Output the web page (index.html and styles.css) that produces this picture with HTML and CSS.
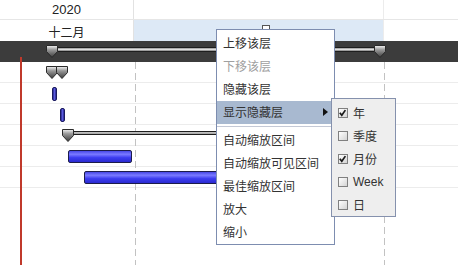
FILE: index.html
```html
<!DOCTYPE html>
<html>
<head>
<meta charset="utf-8">
<link rel="stylesheet" href="styles.css">
</head>
<body>
<div class="chart">
  <svg class="defs" width="0" height="0">
    <defs>
      <linearGradient id="mk" x1="0" y1="0" x2="0" y2="1">
        <stop offset="0" stop-color="#f4f4f4"/>
        <stop offset="0.35" stop-color="#9a9a9a"/>
        <stop offset="1" stop-color="#3a3a3a"/>
      </linearGradient>
    </defs>
  </svg>
  <div class="hrow hrow-year">
    <div class="cell cell-a">2020</div>
    <div class="cell cell-b"></div>
    <div class="cell cell-c"></div>
  </div>
  <div class="hrow hrow-month">
    <div class="cell cell-a">十二月</div>
    <div class="cell cell-b cell-sel"></div>
    <div class="cell cell-c"></div>
  </div>
  <div class="darkbar"></div>
  <div class="rows">
    <div class="row"></div>
    <div class="row"></div>
    <div class="row"></div>
    <div class="row"></div>
    <div class="row"></div>
    <div class="row"></div>
  </div>

  <div class="vline dash dash-1"></div>
  <div class="vline dash dash-2"></div>
  <div class="vline today"></div>
  <div class="scalebox"></div>

  <div class="track track-top"></div>
  <svg class="marker mk-top-start" viewBox="0 0 12 13"><path d="M0.5 0.5H11.5V6.5L6 12.5L0.5 6.5Z" fill="url(#mk)" stroke="#2a2a2a"/></svg>
  <svg class="marker mk-top-end" viewBox="0 0 12 13"><path d="M0.5 0.5H11.5V6.5L6 12.5L0.5 6.5Z" fill="url(#mk)" stroke="#2a2a2a"/></svg>

  <svg class="marker mk-r1a" viewBox="0 0 12 13"><path d="M0.5 0.5H11.5V6.5L6 12.5L0.5 6.5Z" fill="url(#mk)" stroke="#2a2a2a"/></svg>
  <svg class="marker mk-r1b" viewBox="0 0 12 13"><path d="M0.5 0.5H11.5V6.5L6 12.5L0.5 6.5Z" fill="url(#mk)" stroke="#2a2a2a"/></svg>

  <div class="pill pill-1"></div>
  <div class="pill pill-2"></div>

  <div class="track track-sum"></div>
  <svg class="marker mk-sum" viewBox="0 0 12 13"><path d="M0.5 0.5H11.5V6.5L6 12.5L0.5 6.5Z" fill="url(#mk)" stroke="#2a2a2a"/></svg>

  <div class="bar bar-1"></div>
  <div class="bar bar-2"></div>

  <div class="menu">
    <div class="mi">上移该层</div>
    <div class="mi mi-dis">下移该层</div>
    <div class="mi">隐藏该层</div>
    <div class="mi mi-hl">显示隐藏层<span class="arrow"></span></div>
    <div class="sep"></div>
    <div class="mi">自动缩放区间</div>
    <div class="mi">自动缩放可见区间</div>
    <div class="mi">最佳缩放区间</div>
    <div class="mi">放大</div>
    <div class="mi">缩小</div>
  </div>

  <div class="submenu">
    <div class="si"><span class="cb"><svg viewBox="0 0 10 10"><path d="M2 4.8L4.2 7.6L8.2 1.8" fill="none" stroke="#1a1a1a" stroke-width="1.9"/></svg></span>年</div>
    <div class="si"><span class="cb"></span>季度</div>
    <div class="si"><span class="cb"><svg viewBox="0 0 10 10"><path d="M2 4.8L4.2 7.6L8.2 1.8" fill="none" stroke="#1a1a1a" stroke-width="1.9"/></svg></span>月份</div>
    <div class="si si-latin"><span class="cb"></span>Week</div>
    <div class="si"><span class="cb"></span>日</div>
  </div>
</div>
</body>
</html>
```

FILE: styles.css
```css
html, body {
  margin: 0;
  padding: 0;
  background: #ffffff;
}
body {
  width: 458px;
  height: 265px;
  overflow: hidden;
  font-family: "Liberation Sans", "Noto Sans CJK SC", sans-serif;
  color: #333333;
}
.chart {
  position: relative;
  width: 458px;
  height: 265px;
}
.defs {
  position: absolute;
}
.hrow {
  display: flex;
}
.hrow-year {
  height: 19px;
  border-bottom: 1px solid #e6e6e6;
}
.hrow-month {
  height: 21px;
}
.cell {
  display: flex;
  align-items: center;
  justify-content: center;
  font-size: 13px;
  color: #222222;
}
.cell-a {
  width: 133px;
  border-right: 1px solid #e2e2e2;
}
.hrow-month .cell-a {
  font-family: "Noto Sans CJK SC", sans-serif;
  font-size: 12px;
  padding-top: 1px;
}
.cell-b {
  width: 249px;
  border-right: 1px solid #ececec;
}
.cell-sel {
  background: #dde9f6;
}
.cell-c {
  flex: 1;
}
.darkbar {
  height: 21px;
  background: #3c3c3c;
}
.row {
  height: 20px;
  border-bottom: 1px solid #ececec;
}

.vline {
  position: absolute;
  width: 1px;
}
.dash {
  top: 62px;
  bottom: 0;
  background: repeating-linear-gradient(to bottom, #c2c2c2 0 7px, transparent 7px 11px);
}
.dash-1 { left: 135px; }
.dash-2 { left: 384px; }
.today {
  left: 20px;
  top: 57px;
  bottom: 0;
  width: 2px;
  background: #c0392b;
}
.scalebox {
  position: absolute;
  left: 262px;
  top: 25px;
  width: 6px;
  height: 6px;
  border: 1px solid #555555;
  background: #ffffff;
}

.track {
  position: absolute;
  height: 3px;
  border: 1px solid #1e1e1e;
  background: linear-gradient(to bottom, #8a8a8a, #e8e8e8 45%, #7a7a7a);
}
.track-top {
  left: 56px;
  width: 318px;
  top: 47px;
}
.track-sum {
  left: 72px;
  width: 190px;
  top: 131px;
  height: 2px;
}
.marker {
  position: absolute;
  width: 12px;
  height: 13px;
}
.mk-top-start { left: 46px; top: 45px; }
.mk-top-end { left: 374px; top: 45px; }
.mk-r1a { left: 46px; top: 66px; }
.mk-r1b { left: 56px; top: 66px; }
.mk-sum { left: 62px; top: 129px; }

.pill {
  position: absolute;
  width: 3px;
  height: 12px;
  border-radius: 2px;
  background: linear-gradient(to right, #2a2a8a, #5a5ae0, #2a2a8a);
  border: 0.5px solid #1a1a60;
}
.pill-1 { left: 52px; top: 87px; }
.pill-2 { left: 60px; top: 108px; }

.bar {
  position: absolute;
  height: 11px;
  border: 1px solid #1c1c4a;
  border-radius: 2px;
  background: linear-gradient(to bottom, #4747e6, #7a7aff 30%, #3d3df0 60%, #2a2ad0);
}
.bar-1 { left: 68px; width: 62px; top: 150px; }
.bar-2 { left: 84px; width: 180px; top: 171px; }

.menu {
  position: absolute;
  left: 216px;
  top: 29px;
  width: 117px;
  height: 212px;
  padding-top: 2px;
  background: #ffffff;
  border: 1px solid #7d8db0;
  font-family: "Noto Sans CJK SC", sans-serif;
  font-size: 12px;
}
.mi {
  position: relative;
  height: 23px;
  line-height: 22px;
  padding-left: 6px;
  color: #333333;
}
.mi-dis {
  color: #a0a0a0;
}
.mi-hl {
  background: #a8b9d0;
}
.arrow {
  position: absolute;
  right: 6px;
  top: 7px;
  width: 0;
  height: 0;
  border-top: 4px solid transparent;
  border-bottom: 4px solid transparent;
  border-left: 5px solid #111111;
}
.sep {
  height: 2px;
  border-top: 1px solid #c4c9d6;
  margin-top: 2px;
}

.submenu {
  position: absolute;
  left: 331px;
  top: 98px;
  width: 63px;
  height: 115px;
  padding-top: 2px;
  background: #eeeeee;
  border: 1px solid #8591ad;
  font-family: "Noto Sans CJK SC", sans-serif;
  font-size: 12px;
}
.si {
  display: flex;
  align-items: center;
  height: 23px;
  padding-left: 6px;
  color: #333333;
}
.si-latin {
  font-family: "Liberation Sans", sans-serif;
}
.cb {
  width: 8px;
  height: 8px;
  margin-right: 5px;
  border: 1px solid #808080;
  background: linear-gradient(to bottom right, #ffffff, #d4d4d4);
  display: flex;
}
.cb svg {
  width: 10px;
  height: 10px;
  margin: -1px 0 0 -1px;
}
```
